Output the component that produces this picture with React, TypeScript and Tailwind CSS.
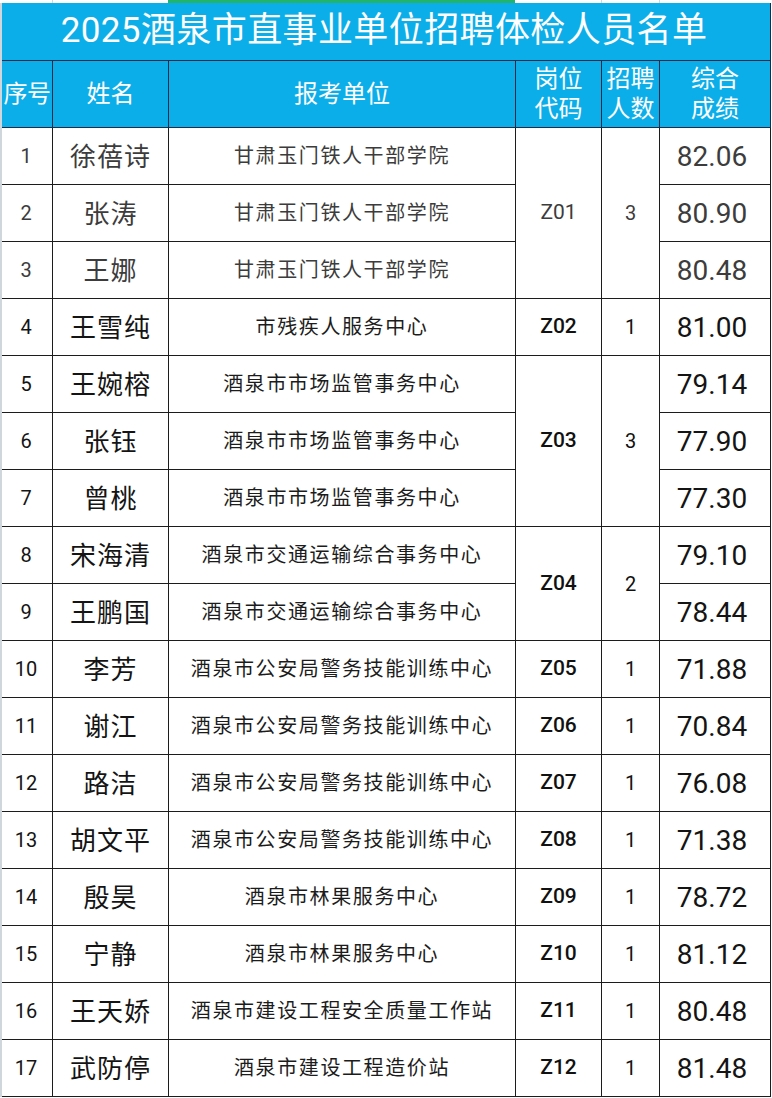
import React from "react";

type Row = {
  no: number;
  name: string;
  unit: string;
  score: string;
};

const rows: Row[] = [
  { no: 1, name: "徐蓓诗", unit: "甘肃玉门铁人干部学院", score: "82.06" },
  { no: 2, name: "张涛", unit: "甘肃玉门铁人干部学院", score: "80.90" },
  { no: 3, name: "王娜", unit: "甘肃玉门铁人干部学院", score: "80.48" },
  { no: 4, name: "王雪纯", unit: "市残疾人服务中心", score: "81.00" },
  { no: 5, name: "王婉榕", unit: "酒泉市市场监管事务中心", score: "79.14" },
  { no: 6, name: "张钰", unit: "酒泉市市场监管事务中心", score: "77.90" },
  { no: 7, name: "曾桃", unit: "酒泉市市场监管事务中心", score: "77.30" },
  { no: 8, name: "宋海清", unit: "酒泉市交通运输综合事务中心", score: "79.10" },
  { no: 9, name: "王鹏国", unit: "酒泉市交通运输综合事务中心", score: "78.44" },
  { no: 10, name: "李芳", unit: "酒泉市公安局警务技能训练中心", score: "71.88" },
  { no: 11, name: "谢江", unit: "酒泉市公安局警务技能训练中心", score: "70.84" },
  { no: 12, name: "路洁", unit: "酒泉市公安局警务技能训练中心", score: "76.08" },
  { no: 13, name: "胡文平", unit: "酒泉市公安局警务技能训练中心", score: "71.38" },
  { no: 14, name: "殷昊", unit: "酒泉市林果服务中心", score: "78.72" },
  { no: 15, name: "宁静", unit: "酒泉市林果服务中心", score: "81.12" },
  { no: 16, name: "王天娇", unit: "酒泉市建设工程安全质量工作站", score: "80.48" },
  { no: 17, name: "武防停", unit: "酒泉市建设工程造价站", score: "81.48" },
];

const groups: Record<number, { code: string; count: string; span: number }> = {
  0: { code: "Z01", count: "3", span: 3 },
  3: { code: "Z02", count: "1", span: 1 },
  4: { code: "Z03", count: "3", span: 3 },
  7: { code: "Z04", count: "2", span: 2 },
  9: { code: "Z05", count: "1", span: 1 },
  10: { code: "Z06", count: "1", span: 1 },
  11: { code: "Z07", count: "1", span: 1 },
  12: { code: "Z08", count: "1", span: 1 },
  13: { code: "Z09", count: "1", span: 1 },
  14: { code: "Z10", count: "1", span: 1 },
  15: { code: "Z11", count: "1", span: 1 },
  16: { code: "Z12", count: "1", span: 1 },
};

const FONT = { fontFamily: "Roboto, 'Noto Sans CJK SC', sans-serif" };

const cell = "flex items-center justify-center border-r border-b border-[#1c1c1c]";

export default function App() {
  const cells: React.ReactNode[] = [];
  rows.forEach((r, i) => {
    const gray = i < 3;
    const color = gray ? "text-[#3c3c3c]" : "text-[#141414]";
    cells.push(
      <div key={`n${i}`} className={`${cell} ${color} text-[20px] pr-[2px]`}>
        {r.no}
      </div>
    );
    cells.push(
      <div key={`m${i}`} className={`${cell} ${color} text-[26px] tracking-[1px] pt-[3px]`}>
        {r.name}
      </div>
    );
    cells.push(
      <div key={`u${i}`} className={`${cell} ${gray ? "text-[#3c3c3c]" : "text-[#1c1c1c]"} text-[20px] tracking-[1.6px]`}>
        {r.unit}
      </div>
    );
    const g = groups[i];
    if (g) {
      const spanCls = g.span === 3 ? "row-span-3" : g.span === 2 ? "row-span-2" : "";
      cells.push(
        <div
          key={`c${i}`}
          className={`${cell} ${spanCls} ${i === 0 ? "text-[#3c3c3c] font-normal" : "text-[#111] font-medium"} text-[21px]`}
        >
          {g.code}
        </div>
      );
      cells.push(
        <div key={`k${i}`} className={`${cell} ${spanCls} ${i === 0 ? "text-[#3c3c3c]" : "text-[#111]"} text-[20px]`}>
          {g.count}
        </div>
      );
    }
    cells.push(
      <div key={`s${i}`} className={`${cell} ${color} text-[28px] pt-[2px] pr-[6px]`}>
        {r.score}
      </div>
    );
  });

  return (
    <div className="w-[772px] bg-white" style={FONT}>
      <div className="flex h-[3px] w-[772px]">
        <div className="w-[52px] bg-white" />
        <div className="w-[1px] bg-[#d6d6d6]" />
        <div className="w-[115px] bg-white" />
        <div className="w-[347px] bg-[#22b46a]" />
        <div className="w-[86px] bg-white" />
        <div className="w-[1px] bg-[#d6d6d6]" />
        <div className="w-[57px] bg-white" />
        <div className="w-[1px] bg-[#d6d6d6]" />
        <div className="flex-1 bg-white" />
      </div>

      <div className="w-[771px] border-l-2 border-[#cfd6dc]">
        <div className="flex h-[58px] items-center justify-center border-b border-r border-[#1d2b47] bg-[#0caeea] text-[35px] text-white tracking-[0.4px] pr-[4px]">
          2025酒泉市直事业单位招聘体检人员名单
        </div>

        <div className="grid h-[67px] grid-cols-[51px_116px_347px_86px_58px_111px] border-b border-[#1d2b47] bg-[#0caeea] text-white">
          <div className="flex items-center justify-center border-r border-[#1d2b47] text-[24px] tracking-[-0.5px]">序号</div>
          <div className="flex items-center justify-center border-r border-[#1d2b47] text-[24px]">姓名</div>
          <div className="flex items-center justify-center border-r border-[#1d2b47] text-[24px]">报考单位</div>
          <div className="flex flex-col items-center justify-center border-r border-[#1d2b47] text-[24px] leading-[30px]">
            <span>岗位</span>
            <span>代码</span>
          </div>
          <div className="flex flex-col items-center justify-center border-r border-[#1d2b47] text-[24px] leading-[30px]">
            <span>招聘</span>
            <span>人数</span>
          </div>
          <div className="flex flex-col items-center justify-center border-r border-[#1d2b47] text-[24px] leading-[30px]">
            <span>综合</span>
            <span>成绩</span>
          </div>
        </div>

        <div className="grid grid-cols-[51px_116px_347px_86px_58px_111px] auto-rows-[57px]">
          {cells}
        </div>
      </div>
    </div>
  );
}
